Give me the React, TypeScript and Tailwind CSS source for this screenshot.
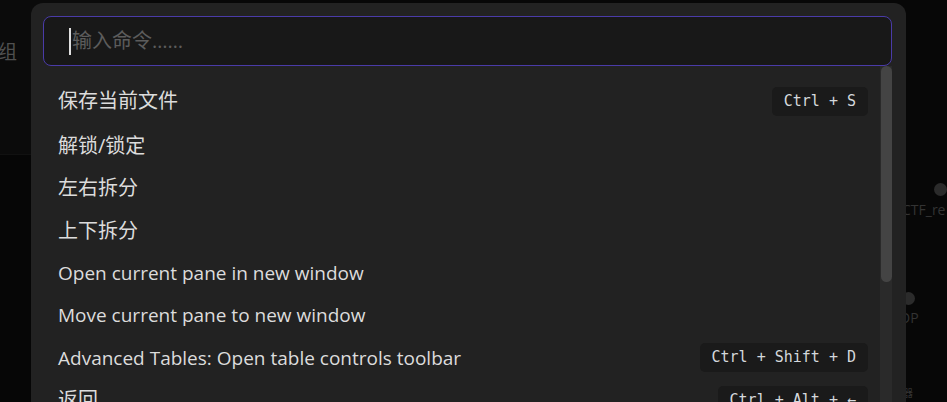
import React from "react";

type Command = { label: string; keys?: string; cjk?: boolean };

const commands: Command[] = [
  { label: "保存当前文件", keys: "Ctrl + S", cjk: true },
  { label: "解锁/锁定", cjk: true },
  { label: "左右拆分", cjk: true },
  { label: "上下拆分", cjk: true },
  { label: "Open current pane in new window" },
  { label: "Move current pane to new window" },
  { label: "Advanced Tables: Open table controls toolbar", keys: "Ctrl + Shift + D" },
  { label: "返回", keys: "Ctrl + Alt + ←", cjk: true },
];

const uiFont = "font-['Open_Sans','Noto_Sans_CJK_SC',sans-serif]";

function Kbd({ children }: { children: React.ReactNode }) {
  return (
    <span className="inline-flex h-[29px] items-center rounded-[5px] bg-[#1a1a1a] px-3 font-['DejaVu_Sans_Mono','Liberation_Mono',monospace] text-[15px] leading-none text-[#d4d8dc]">
      {children}
    </span>
  );
}

export default function App() {
  return (
    <div className={`relative h-[402px] w-[947px] overflow-hidden bg-[#070707] ${uiFont}`}>
      {/* background: left sidebar + graph view behind the modal */}
      <div className="flex h-full">
        <div className="flex w-[100px] flex-col">
          <div className="h-[155px] border-b border-[#111] bg-[#0b0b0b] pt-[38px] text-[19px] text-[#505050]">
            <span className="-ml-[2px]">组</span>
          </div>
          <div className="flex-1 bg-[#060606]" />
        </div>
        <div className="flex-1" />
      </div>
      <div className="absolute left-[934px] top-[183px] h-[13px] w-[13px] rounded-full bg-[#2b2b2b]" />
      <div className="absolute left-[902px] top-[199px] text-[14px] text-[#333]">CTF_re</div>
      <div className="absolute left-[902px] top-[292px] h-[13px] w-[13px] rounded-full bg-[#2b2b2b]" />
      <div className="absolute left-[900px] top-[307px] text-[14px] text-[#333]">DP</div>
      <div className="absolute left-[903px] top-[386px] text-[10px] text-[#333]">器</div>

      {/* command palette */}
      <div className="absolute left-[31px] top-[3px] flex h-[420px] w-[875px] flex-col rounded-t-[12px] bg-[#222222] pl-3 pr-[14px] pt-[13px]">
        <div className="flex h-[50px] shrink-0 items-center rounded-[8px] border border-[#4a3ba8] bg-[#181818] pl-[25px]">
          <span className="mr-[1px] h-[27px] w-[2px] bg-[#e0e0e0]" />
          <span className="text-[20px] text-[#5c5c5c]">输入命令……</span>
        </div>
        <div className="flex flex-1">
          <ul className="flex-1 pt-[11px]">
            {commands.map((c, i) => (
              <li
                key={c.label}
                className={`flex items-center justify-between pl-[15px] pr-3 text-[#dcdcdc] ${
                  i === 0 ? "h-[48px]" : "h-[42.33px]"
                }`}
              >
                <span className={c.cjk ? "text-[20px]" : "text-[19px]"}>{c.label}</span>
                {c.keys && <Kbd>{c.keys}</Kbd>}
              </li>
            ))}
          </ul>
          <div className="w-3 bg-[#2a2a2a] pl-[1px]">
            <div className="h-[216px] w-[11px] rounded-full bg-[#444444]" />
          </div>
        </div>
      </div>
    </div>
  );
}
